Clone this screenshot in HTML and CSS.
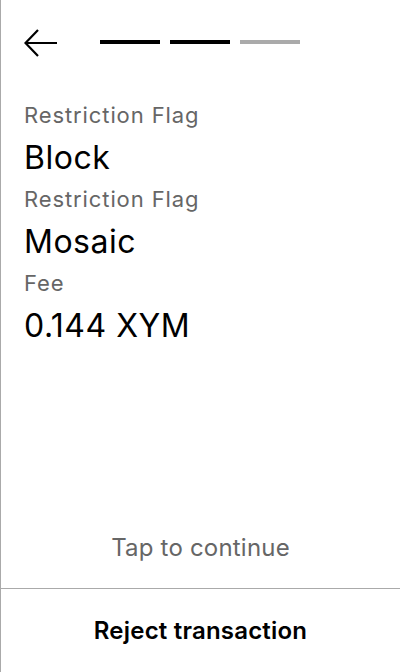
FILE: index.html
```html
<!DOCTYPE html>
<html>
<head>
<meta charset="utf-8">
<link rel="stylesheet" href="styles.css">
</head>
<body>
<div class="screen">
  <div class="header">
    <svg class="back" width="34" height="28" viewBox="0 0 34 28">
      <path d="M14 1 L1.5 14 L14 27 M1.5 14 L33 14" fill="none" stroke="#000" stroke-width="2.2"/>
    </svg>
    <div class="steps">
      <span class="step on"></span>
      <span class="step on"></span>
      <span class="step off"></span>
    </div>
  </div>
  <div class="content">
    <div class="label">Restriction Flag</div>
    <div class="value">Block</div>
    <div class="label">Restriction Flag</div>
    <div class="value">Mosaic</div>
    <div class="label">Fee</div>
    <div class="value">0.144 XYM</div>
  </div>
  <div class="tap">Tap to continue</div>
  <div class="reject">Reject transaction</div>
</div>
</body>
</html>
```
FILE: styles.css
```css
html, body {
  margin: 0;
  padding: 0;
  background: #fff;
}
body {
  font-family: Inter, "Noto Sans", sans-serif;
  color: #000;
}
.screen {
  height: 672px;
  box-sizing: border-box;
  border-left: 1px solid #aaa;
  display: flex;
  flex-direction: column;
}
.header {
  display: flex;
  align-items: center;
  padding: 29px 0 0 23px;
  height: 28px;
}
.back {
  display: block;
}
.steps {
  display: flex;
  gap: 10px;
  margin-left: 42px;
  margin-top: -2px;
}
.step {
  display: block;
  width: 60px;
  height: 4px;
}
.step.on { background: #000; }
.step.off { background: #aaa; }
.content {
  padding: 45px 0 0 23px;
  flex: 1;
}
.label {
  font-size: 22px;
  line-height: 26px;
  letter-spacing: 0.9px;
  color: #666;
}
.value {
  font-size: 32px;
  line-height: 38px;
  letter-spacing: 0.5px;
  margin: 11px 0 9px;
}
.tap {
  text-align: center;
  font-size: 24px;
  color: #666;
  line-height: 29px;
  letter-spacing: 0.2px;
  padding-bottom: 26px;
  border-bottom: 1px solid #aaa;
}
.reject {
  height: 83px;
  display: flex;
  align-items: center;
  justify-content: center;
  font-size: 24px;
  font-weight: 600;
  letter-spacing: 0.2px;
}
```
